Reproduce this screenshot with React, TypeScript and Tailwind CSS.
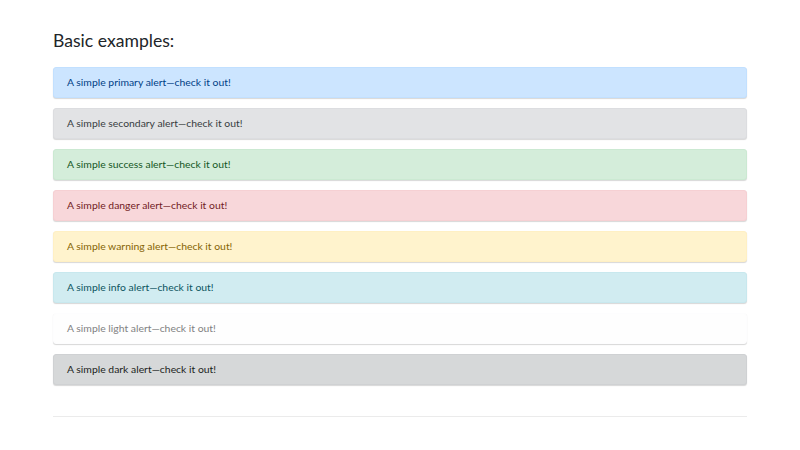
const alerts = [
  { name: "primary", cls: "bg-[#cce5ff] text-[#004085] border-[#c2e0ff]" },
  { name: "secondary", cls: "bg-[#e2e3e5] text-[#383d41] border-[#dcdde0]" },
  { name: "success", cls: "bg-[#d4edda] text-[#155724] border-[#cbe9d2]" },
  { name: "danger", cls: "bg-[#f8d7da] text-[#721c24] border-[#f6d0d3]" },
  { name: "warning", cls: "bg-[#fff3cd] text-[#856404] border-[#fff0c4]" },
  { name: "info", cls: "bg-[#d1ecf1] text-[#0c5460] border-[#c8e8ee]" },
  { name: "light", cls: "bg-[#fefefe] text-[#818182] border-[#fdfdfe]" },
  { name: "dark", cls: "bg-[#d6d8d9] text-[#1b1e21] border-[#cfd1d3]" },
];

export default function App() {
  return (
    <div className="min-h-[450px] bg-white px-[53px] pt-[28px] font-['Lato',sans-serif]">
      <h2 className="text-[17.6px] leading-[26px] text-[#212529]">Basic examples:</h2>
      <div className="mt-[13px] flex flex-col gap-[10px]">
        {alerts.map((a) => (
          <div
            key={a.name}
            className={`h-[31px] rounded-[3px] border px-[13px] text-[10.4px] leading-[29px] shadow-[0_1px_1px_rgba(0,0,0,0.16)] ${a.cls}`}
          >
            A simple {a.name} alert—check it out!
          </div>
        ))}
      </div>
      <hr className="mt-[31px] border-[#ebebeb]" />
    </div>
  );
}
